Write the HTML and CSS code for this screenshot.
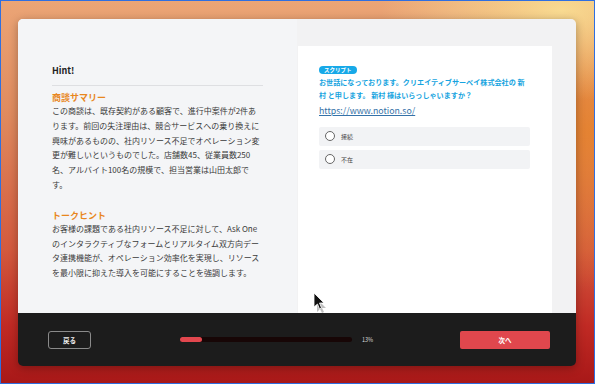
FILE: index.html
```html
<!DOCTYPE html>
<html lang="ja">
<head>
    <meta charset="UTF-8">
    <title>トークスクリプト</title>
    <link rel="stylesheet" href="styles.css">
</head>
<body>
    <div class="desktop">
        <div class="window">
            <div class="main">
                <div class="hint">
                    <h2 class="hint-title">Hint!</h2>
                    <h3 class="hint-heading">商談サマリー</h3>
                    <p class="hint-text">この商談は、既存契約がある顧客で、進行中案件が2件あります。前回の失注理由は、競合サービスへの乗り換えに興味があるものの、社内リソース不足でオペレーション変更が難しいというものでした。店舗数45、従業員数250名、アルバイト100名の規模で、担当営業は山田太郎です。</p>
                    <h3 class="hint-heading">トークヒント</h3>
                    <p class="hint-text">お客様の課題である社内リソース不足に対して、Ask Oneのインタラクティブなフォームとリアルタイム双方向データ連携機能が、オペレーション効率化を実現し、リソースを最小限に抑えた導入を可能にすることを強調します。</p>
                </div>
                <div class="script-area">
                    <div class="script-card">
                        <span class="badge">スクリプト</span>
                        <p class="script-text">お世話になっております。クリエイティブサーベイ株式会社の 新村 と申します。 新村 様はいらっしゃいますか？</p>
                        <a class="script-link" href="#">https://www.notion.so/</a>
                        <div class="options">
                            <label class="option"><span class="radio"></span>接続</label>
                            <label class="option"><span class="radio"></span>不在</label>
                        </div>
                    </div>
                </div>
            </div>
            <div class="footer">
                <button class="btn-back">戻る</button>
                <div class="progress">
                    <div class="progress-track">
                        <div class="progress-fill" style="width: 13%"></div>
                    </div>
                    <span class="progress-label">13%</span>
                </div>
                <button class="btn-next">次へ</button>
            </div>
            <svg class="cursor" width="16" height="22" viewBox="0 0 16 22">
                <path d="M4 7 L4 20 L7 17 L9 21 L11 20 L9 16 L13 16 Z" fill="#000" opacity="0.25"/>
                <path d="M1 1 L1 15 L4.5 12 L6.5 17 L8.5 16 L6.5 11 L11 11 Z" fill="#111" stroke="#fff" stroke-width="0.8"/>
            </svg>
        </div>
    </div>
</body>
</html>
```

FILE: styles.css
```css
* {
    box-sizing: border-box;
}
body {
    margin: 0;
    font-family: "Noto Sans CJK JP", "Noto Sans", sans-serif;
    color: #333;
}
.desktop {
    width: 595px;
    height: 384px;
    border: 1px solid #2f6fe0;
    padding: 18px 0 0 17px;
    background:
        radial-gradient(ellipse 180px 90px at 560px 10px, rgba(250, 225, 150, 0.9), rgba(250, 225, 150, 0)),
        radial-gradient(ellipse 200px 160px at 590px 130px, rgba(230, 130, 40, 0.8), rgba(230, 130, 40, 0)),
        linear-gradient(180deg, #eba576 0%, #df8a5e 30%, #d35a3e 65%, #c02a24 85%, #a81818 100%);
}
.window {
    position: relative;
    width: 558px;
    height: 347px;
    border-radius: 5px;
    overflow: hidden;
    display: flex;
    flex-direction: column;
    box-shadow: 0 2px 10px rgba(0, 0, 0, 0.3);
}
.main {
    height: 294px;
    flex: none;
    display: flex;
    overflow: hidden;
    background: #f2f2f3;
}
.hint {
    width: 279px;
    padding: 45px 34px 0 34px;
    background: #f4f5f7;
}
.hint-title {
    margin: 0;
    font-size: 9px;
    font-weight: bold;
    line-height: 13px;
    color: #222;
    padding-bottom: 8px;
    border-bottom: 1px solid #dedfe2;
}
.hint-heading {
    margin: 5px 0 0;
    font-size: 9px;
    font-weight: bold;
    color: #e8871e;
    line-height: 13px;
}
.hint-text {
    margin: 0 0 16px;
    font-size: 8px;
    line-height: 14.8px;
    color: #3a3a3a;
}
.script-area {
    flex: 1;
    padding: 27px 24px 0 1px;
}
.script-card {
    height: 100%;
    background: #fff;
    padding: 20px 22px 0 21px;
}
.badge {
    display: block;
    width: fit-content;
    background: #17a9e8;
    color: #fff;
    font-size: 5.5px;
    font-weight: bold;
    line-height: 8px;
    padding: 0 5px;
    border-radius: 5px;
}
.script-text {
    margin: 1.5px 0 0;
    font-size: 7.1px;
    font-weight: bold;
    line-height: 13px;
    color: #16a4e0;
}
.script-link {
    display: block;
    margin-top: 3px;
    font-size: 8.8px;
    line-height: 12px;
    color: #3572a8;
}
.options {
    margin-top: 10px;
    display: flex;
    flex-direction: column;
    gap: 4px;
}
.option {
    display: flex;
    align-items: center;
    gap: 6px;
    height: 19px;
    padding-left: 6px;
    background: #f2f3f5;
    border-radius: 2px;
    font-size: 6px;
    color: #444;
}
.radio {
    width: 10px;
    height: 10px;
    border: 1px solid #666;
    border-radius: 50%;
    background: #fff;
}
.footer {
    height: 53px;
    background: #1c1c1c;
    display: flex;
    align-items: center;
    padding: 0 26px 0 30px;
}
.btn-back {
    width: 43px;
    height: 18px;
    background: transparent;
    border: 1px solid #8a8a8a;
    border-radius: 3px;
    color: #eee;
    font-family: inherit;
    font-size: 6.5px;
    font-weight: bold;
    padding: 0;
}
.progress {
    display: flex;
    align-items: center;
    margin-left: 89px;
    gap: 10px;
}
.progress-track {
    width: 172px;
    height: 5px;
    background: #170606;
    border-radius: 3px;
}
.progress-fill {
    height: 100%;
    background: #e2474e;
    border-radius: 3px;
}
.progress-label {
    color: #ddd;
    font-size: 5.5px;
}
.btn-next {
    margin-left: auto;
    width: 90px;
    height: 18px;
    background: #e0474d;
    border: none;
    border-radius: 2px;
    color: #fff;
    font-family: inherit;
    font-size: 6.5px;
    font-weight: bold;
    padding: 0;
}
.cursor {
    position: absolute;
    left: 295px;
    top: 273px;
}
```
